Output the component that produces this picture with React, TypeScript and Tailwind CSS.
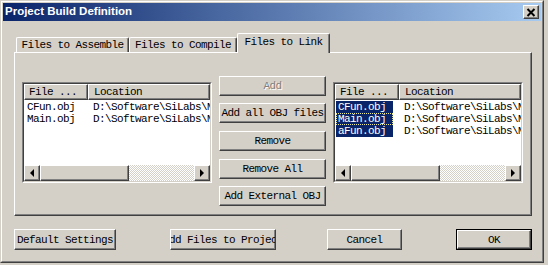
import type { ReactNode } from "react";

const monoBase = "font-['Liberation_Mono',monospace] text-[11px] tracking-[-0.6px] leading-[12px]";
const mono = `${monoBase} text-black`;
const raised =
  "border border-t-white border-l-white border-r-[#404040] border-b-[#404040] shadow-[inset_-1px_-1px_#808080] bg-[#d4d0c8]";

const LOCATION = "D:\\Software\\SiLabs\\MCU\\Examples\\C8051F";

type BtnProps = {
  className?: string;
  disabled?: boolean;
  children: ReactNode;
};

function Btn({ className = "", disabled, children }: BtnProps) {
  return (
    <div className={`${raised} ${className} flex items-center justify-center overflow-hidden whitespace-nowrap shrink-0`}>
      <span className={disabled ? `${monoBase} text-[#808080] [text-shadow:1px_1px_0_#ffffff]` : mono}>
        {children}
      </span>
    </div>
  );
}

function ScrollArrow({ dir }: { dir: "left" | "right" }) {
  return (
    <div className={`${raised} w-[16px] h-full flex items-center justify-center shrink-0`}>
      {dir === "left" ? (
        <div className="w-0 h-0 border-y-[4px] border-y-transparent border-r-[4px] border-r-black" />
      ) : (
        <div className="w-0 h-0 border-y-[4px] border-y-transparent border-l-[4px] border-l-black" />
      )}
    </div>
  );
}

type FileRow = { name: string; focus?: boolean };

function FileList({ rows, selected }: { rows: FileRow[]; selected: boolean }) {
  return (
    <div className="w-[190px] h-[101px] mt-[6px] shrink-0 border border-t-[#808080] border-l-[#808080] border-r-white border-b-white">
      <div className="h-full border border-t-[#404040] border-l-[#404040] border-r-[#d4d0c8] border-b-[#d4d0c8] bg-white flex flex-col overflow-hidden">
        <div className="flex h-[16px] shrink-0">
          <div className={`${raised} w-[64px] shrink-0 pl-[4px] flex items-center`}>
            <span className={mono}>File ...</span>
          </div>
          <div className={`${raised} flex-1 pl-[5px] flex items-center`}>
            <span className={mono}>Location</span>
          </div>
        </div>
        <div className="flex-1 pt-[1px] flex flex-col">
          {rows.map((row) => (
            <div key={row.name} className="flex h-[12px] items-center whitespace-nowrap overflow-hidden">
              <div className="w-[64px] shrink-0 flex">
                <span
                  className={`${selected ? `${monoBase} bg-[#0a246a] text-white` : mono} ml-[1px] w-[57px] pl-[2px] h-[12px] ${
                    row.focus ? "outline-1 outline-dotted outline-[#e8e8a0] -outline-offset-1" : ""
                  }`}
                >
                  {row.name}
                </span>
              </div>
              <span className={`${mono} pl-[5px]`}>{LOCATION}</span>
            </div>
          ))}
        </div>
        <div className="h-[16px] shrink-0 flex">
          <ScrollArrow dir="left" />
          <div className={`${raised} w-[89px] h-full shrink-0`} />
          <div className="flex-1 h-full bg-[repeating-conic-gradient(#d4d0c8_0%_25%,#ffffff_0%_50%)] bg-[length:2px_2px]" />
          <ScrollArrow dir="right" />
        </div>
      </div>
    </div>
  );
}

function Tab({ label, active, className = "" }: { label: string; active?: boolean; className?: string }) {
  if (active) {
    return (
      <div
        className={`relative z-10 h-[20px] -mb-px shrink-0 bg-[#d4d0c8] border-t border-l border-r border-t-white border-l-white border-r-[#404040] shadow-[inset_-1px_0_#808080] rounded-t-[2px] pt-[2px] flex justify-center ${className}`}
      >
        <span className={mono}>{label}</span>
      </div>
    );
  }
  return (
    <div
      className={`h-[15px] shrink-0 border-t border-l border-r border-t-white border-l-white border-r-[#404040] shadow-[inset_-1px_0_#808080] rounded-t-[2px] flex items-center justify-center ${className}`}
    >
      <span className={mono}>{label}</span>
    </div>
  );
}

export default function App() {
  return (
    <div className="w-[548px] h-[265px] bg-[#d4d0c8] overflow-hidden">
      <div className="w-[544px] h-[263px] border border-t-[#d4d0c8] border-l-[#d4d0c8] border-r-[#404040] border-b-[#404040]">
        <div className="h-full border border-t-white border-l-white border-r-[#808080] border-b-[#808080] p-px bg-[#d4d0c8] flex flex-col">
          {/* title bar */}
          <div className="h-[18px] shrink-0 flex items-center justify-between pl-[2px] pr-[2px] bg-[linear-gradient(to_right,#0a246a,#a6caf0)]">
            <span className="font-['Liberation_Sans',Arial,sans-serif] font-bold text-[11.5px] text-white leading-none">
              Project Build Definition
            </span>
            <div className={`${raised} w-[16px] h-[14px] flex items-center justify-center`}>
              <svg width="10" height="9" viewBox="0 0 10 9">
                <path d="M1.5 1 L8.5 8 M8.5 1 L1.5 8" stroke="#000" strokeWidth="2" />
              </svg>
            </div>
          </div>

          {/* body */}
          <div className="flex-1 pl-[11px] pt-[12px] flex flex-col">
            <div className="flex items-end pl-[2px]">
              <Tab label="Files to Assemble" className="w-[113px]" />
              <Tab label="Files to Compile" className="w-[108px]" />
              <Tab label="Files to Link" active className="w-[93px]" />
            </div>
            <div className="w-[518px] h-[164px] shrink-0 border border-t-white border-l-white border-r-[#404040] border-b-[#404040] shadow-[inset_-1px_-1px_#808080] pl-[7px] pt-[23px] flex items-start gap-[7px]">
              <FileList selected={false} rows={[{ name: "CFun.obj" }, { name: "Main.obj" }]} />
              <div className="w-[107px] shrink-0 flex flex-col">
                <Btn className="h-[20px]" disabled>
                  Add
                </Btn>
                <Btn className="h-[20px] mt-[7px]">Add all OBJ files</Btn>
                <Btn className="h-[20px] mt-[8px]">Remove</Btn>
                <Btn className="h-[20px] mt-[8px]">Remove All</Btn>
                <Btn className="h-[20px] mt-[7px]">Add External OBJ</Btn>
              </div>
              <FileList
                selected
                rows={[{ name: "CFun.obj" }, { name: "Main.obj", focus: true }, { name: "aFun.obj" }]}
              />
            </div>

            {/* bottom buttons */}
            <div className="flex mt-[13px]">
              <Btn className="w-[102px] h-[21px]">Default Settings</Btn>
              <Btn className="w-[106px] h-[21px] ml-[54px]">Add Files to Project</Btn>
              <Btn className="w-[75px] h-[21px] ml-[51px]">Cancel</Btn>
              <div className="w-[76px] h-[21px] ml-[54px] border border-black flex">
                <Btn className="flex-1 h-full">OK</Btn>
              </div>
            </div>
          </div>
        </div>
      </div>
    </div>
  );
}
